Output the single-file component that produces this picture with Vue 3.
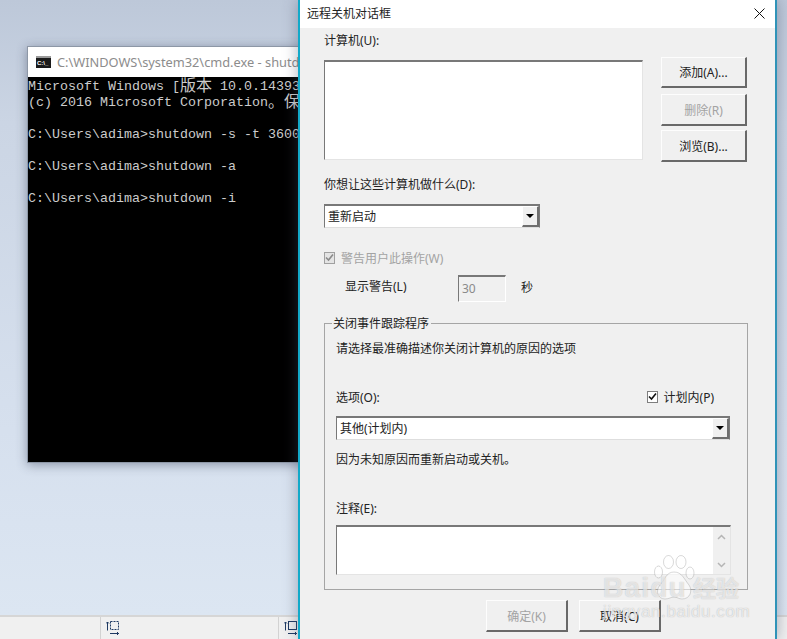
<script setup>
const buttons = [
  { label: '添加(A)...', disabled: false },
  { label: '删除(R)', disabled: true },
  { label: '浏览(B)...', disabled: false },
]
</script>

<template>
  <div class="stage">
    <div class="desktop"></div>
    <div class="taskbar">
      <div class="tb-lead"></div>
      <div class="tb-item">
        <svg class="tb-icon" width="14" height="14" viewBox="0 0 14 14" fill="none" stroke="#1f3a63" stroke-width="1">
          <path d="M1.5 9.5V1M0 2.5L1.5 1L3 2.5" />
          <rect x="4.5" y="0.5" width="8" height="8" stroke-dasharray="2 1" />
          <path d="M4 12.5H13M11.5 11V14" />
        </svg>
      </div>
      <div class="tb-item">
        <svg class="tb-icon" width="14" height="14" viewBox="0 0 14 14" fill="none" stroke="#1f3a63" stroke-width="1">
          <path d="M1.5 9.5V1M0 2.5L1.5 1L3 2.5" />
          <rect x="4.5" y="0.5" width="8" height="8" />
          <path d="M4 12.5H13M11.5 11V14" />
        </svg>
      </div>
    </div>

    <div class="cmd">
      <div class="cmd-title">
        <svg class="cmd-icon" width="15" height="12" viewBox="0 0 15 12">
          <rect width="15" height="12" fill="#1a1a1a" />
          <rect x="0" y="0" width="15" height="2" fill="#9a9a9a" />
          <text x="1" y="9" font-size="6" font-weight="700" fill="#fff" font-family="Liberation Sans, sans-serif">C:\_</text>
        </svg>
        <span class="cmd-caption">C:\WINDOWS\system32\cmd.exe - shutdown -i</span>
      </div>
      <div class="cmd-body">
        <div class="ln">Microsoft Windows [<span class="cj">版本</span> 10.0.14393</div>
        <div class="ln">(c) 2016 Microsoft Corporation<span class="cj">。保</span></div>
        <div class="ln">&nbsp;</div>
        <div class="ln">C:\Users\adima&gt;shutdown -s -t 3600</div>
        <div class="ln">&nbsp;</div>
        <div class="ln">C:\Users\adima&gt;shutdown -a</div>
        <div class="ln">&nbsp;</div>
        <div class="ln">C:\Users\adima&gt;shutdown -i</div>
      </div>
    </div>

    <div class="dialog">
      <div class="dlg-title">
        <span>远程关机对话框</span>
        <svg class="close" width="11" height="11" viewBox="0 0 11 11" stroke="#111" stroke-width="1" fill="none">
          <path d="M0.5 0.5L10.5 10.5M10.5 0.5L0.5 10.5" />
        </svg>
      </div>
      <div class="dlg-body">
        <div class="top-row">
          <div class="list-col">
            <div class="lbl">计算机(U):</div>
            <div class="sunken listbox"></div>
          </div>
          <div class="btn-col">
            <div
              v-for="b in buttons"
              :key="b.label"
              class="btn side-btn"
              :class="{ off: b.disabled }"
            >{{ b.label }}</div>
          </div>
        </div>

        <div class="lbl lbl-d">你想让这些计算机做什么(D):</div>
        <div class="sunken combo combo-d">
          <span class="combo-text">重新启动</span>
          <span class="drop"><i></i></span>
        </div>

        <div class="check-row">
          <span class="box box-off">
            <svg width="9" height="9" viewBox="0 0 9 9" fill="none" stroke="#8a8a8a" stroke-width="1.6"><path d="M1 4.5L3.5 7L8 1.5" /></svg>
          </span>
          <span class="off-text">警告用户此操作(W)</span>
        </div>

        <div class="warn-row">
          <span class="warn-lbl">显示警告(L)</span>
          <span class="sunken num"><span class="combo-text">30</span></span>
          <span class="sec">秒</span>
        </div>

        <div class="group">
          <span class="legend">关闭事件跟踪程序</span>
          <div class="lbl lead">请选择最准确描述你关闭计算机的原因的选项</div>
          <div class="opt-row">
            <span class="lbl">选项(O):</span>
            <span class="planned">
              <span class="box">
                <svg width="9" height="9" viewBox="0 0 9 9" fill="none" stroke="#111" stroke-width="1.6"><path d="M1 4.5L3.5 7L8 1.5" /></svg>
              </span>
              <span>计划内(P)</span>
            </span>
          </div>
          <div class="sunken combo combo-o">
            <span class="combo-text">其他(计划内)</span>
            <span class="drop"><i></i></span>
          </div>
          <div class="lbl reason">因为未知原因而重新启动或关机。</div>
          <div class="lbl note">注释(E):</div>
          <div class="sunken notebox">
            <div class="scroll">
              <svg width="9" height="6" viewBox="0 0 9 6" fill="none" stroke="#b5b5b5" stroke-width="1.5"><path d="M1 5L4.5 1.5L8 5" /></svg>
              <svg width="9" height="6" viewBox="0 0 9 6" fill="none" stroke="#b5b5b5" stroke-width="1.5"><path d="M1 1L4.5 4.5L8 1" /></svg>
            </div>
          </div>
        </div>

        <div class="footer">
          <div class="btn foot-btn off">确定(K)</div>
          <div class="btn foot-btn">取消(C)</div>
        </div>
      </div>
    </div>

    <div class="mark">
      <svg class="paw" width="42" height="46" viewBox="0 0 42 46" fill="rgba(255,255,255,.5)" stroke="rgba(130,130,130,.3)" stroke-width="1">
        <ellipse cx="5.5" cy="17" rx="4" ry="6" />
        <ellipse cx="15.5" cy="7" rx="5" ry="6.5" />
        <ellipse cx="28" cy="7" rx="5" ry="6.5" />
        <ellipse cx="37" cy="18" rx="4" ry="6" />
        <path d="M21 17C29 17 31 24 36 30C40 36 37 44 29 44C26 44 24 42 21 42C18 42 16 44 12 44C5 44 2 36 7 30C12 25 13 17 21 17Z" />
      </svg>
      <div class="mark-main"><span class="bai">Baidu</span><span class="jy">经验</span></div>
      <div class="mark-url">jingyan.baidu.com</div>
    </div>
  </div>
</template>

<style scoped>
* { box-sizing: border-box; }
.stage {
  position: relative;
  width: 787px;
  height: 639px;
  overflow: hidden;
  display: flex;
  flex-direction: column;
  font-family: "Noto Sans", "Noto Sans CJK SC", sans-serif;
  font-size: 12px;
  color: #222;
}
.desktop {
  flex: 1;
  background: linear-gradient(180deg, #bdc8d9 0%, #cbd5e4 20%, #d6e0ee 70%, #dce6f2 100%);
}
.taskbar {
  height: 24px;
  flex: none;
  display: flex;
  background: #f0f0f0;
  border-top: 2px solid #d6d6d6;
}
.tb-lead { width: 100px; }
.tb-item {
  width: 178px;
  border-left: 1px solid #d2d2d2;
  padding: 4px 0 0 5px;
}
.tb-icon { display: block; }

.cmd {
  position: absolute;
  left: 27px;
  top: 46px;
  width: 290px;
  height: 417px;
  background: #000;
  border: 1px solid #8d97a6;
  box-shadow: 0 2px 10px rgba(50, 60, 85, 0.45);
}
.cmd-title {
  height: 30px;
  background: #fff;
  display: flex;
  align-items: center;
  padding-left: 8px;
  gap: 6px;
}
.cmd-icon { flex: none; }
.cmd-caption {
  color: #8c8c8c;
  font-size: 12.8px;
  white-space: nowrap;
}
.cmd-body {
  color: #ccc;
  font-family: "Liberation Mono", "Noto Sans CJK SC", monospace;
  font-size: 13.33px;
  line-height: 16px;
  padding-top: 2px;
}
.ln { height: 16px; white-space: nowrap; }
.cj {
  font-family: "Noto Sans CJK SC", sans-serif;
  font-size: 16px;
  line-height: 0;
  vertical-align: -1px;
}

.dialog {
  position: absolute;
  left: 298px;
  top: 0;
  width: 479px;
  height: 639px;
  background: #f0f0f0;
  border-left: 2px solid #12a9c9;
  border-right: 2px solid #2f93b8;
  box-shadow: 0 0 14px rgba(70, 80, 105, 0.45);
}
.dlg-title {
  height: 28px;
  background: #fff;
  display: flex;
  align-items: center;
  justify-content: space-between;
  padding: 0 10px 2px 7px;
}
.close { margin-top: 1px; }
.dlg-body { padding: 4px 0 0 24px; }

.lbl { height: 16px; line-height: 18px; }
.top-row { display: flex; align-items: flex-start; height: 129px; }
.list-col { width: 319px; }
.listbox { width: 319px; height: 100px; margin-top: 12px; background: #fff; }
.btn-col {
  margin-left: 18px;
  padding-top: 25px;
  display: flex;
  flex-direction: column;
}
.btn {
  flex: none;
  display: flex;
  align-items: center;
  justify-content: center;
  background: #f0f0f0;
  border-style: solid;
  border-width: 1px 2px 2px 1px;
  border-color: #fdfdfd #696969 #696969 #fdfdfd;
}
.off { color: #a3a3a3; }
.side-btn { width: 86px; height: 32px; margin-bottom: 4px; }
.side-btn:first-child { height: 31px; margin-bottom: 6px; }

.sunken {
  border-style: solid;
  border-width: 2px 1px 1px 1px;
  border-color: #787878 #e4e4e4 #e4e4e4 #787878;
}
.lbl-d { margin-top: 15px; }
.combo {
  height: 24px;
  background: #fff;
  display: flex;
  align-items: center;
  justify-content: space-between;
  padding-left: 3px;
  margin-top: 12px;
  border-right-color: #787878;
  border-bottom-color: #dedede;
}
.combo-text { position: relative; top: -1px; }
.combo-d { width: 216px; }
.combo-o { width: 394px; margin-top: 11px; }
.drop {
  width: 17px;
  height: 21px;
  background: #f0f0f0;
  border-style: solid;
  border-width: 1px 2px 2px 1px;
  border-color: #fff #6e6e6e #6e6e6e #fff;
  display: flex;
  align-items: center;
  justify-content: center;
}
.drop i {
  width: 0;
  height: 0;
  border-left: 4px solid transparent;
  border-right: 4px solid transparent;
  border-top: 4px solid #000;
}

.check-row {
  margin-top: 22px;
  height: 15px;
  display: flex;
  align-items: center;
  gap: 6px;
}
.box {
  width: 11px;
  height: 12px;
  flex: none;
  display: flex;
  align-items: center;
  justify-content: center;
  background: #fff;
  border: 1px solid #7e7e7e;
}
.box-off { background: #e4e4e4; border-color: #a0a0a0; }
.off-text { color: #a3a3a3; }
.warn-row {
  margin-top: 10px;
  height: 27px;
  display: flex;
  align-items: center;
}
.warn-lbl { margin-left: 21px; width: 113px; padding-bottom: 5px; }
.num {
  width: 48px;
  height: 27px;
  display: flex;
  align-items: center;
  padding-left: 3px;
  color: #8a8a8a;
  border-right-color: #fff;
  border-bottom-color: #fff;
}
.sec { margin-left: 15px; padding-bottom: 3px; }

.group {
  position: relative;
  width: 424px;
  height: 267px;
  margin-top: 21px;
  padding: 17px 0 0 11px;
  border: 1px solid #a5a5a5;
}
.legend {
  position: absolute;
  left: 7px;
  top: -8px;
  padding: 0 2px 0 1px;
  line-height: 16px;
  background: #f0f0f0;
}
.lead { line-height: 16px; }
.opt-row {
  margin-top: 32px;
  width: 394px;
  display: flex;
  justify-content: space-between;
}
.planned {
  display: flex;
  align-items: center;
  gap: 6px;
  margin-right: 16px;
  height: 15px;
}
.reason { margin-top: 12px; line-height: 16px; }
.note { margin-top: 33px; line-height: 16px; }
.notebox {
  width: 395px;
  height: 50px;
  margin-top: 8px;
  background: #fff;
  display: flex;
  justify-content: flex-end;
}
.scroll {
  width: 17px;
  background: #f0f0f0;
  display: flex;
  flex-direction: column;
  align-items: center;
  justify-content: space-between;
  padding: 7px 0 6px;
}
.footer {
  display: flex;
  gap: 11px;
  margin: 10px 0 0 162px;
}
.foot-btn { width: 82px; height: 32px; }

.mark {
  position: absolute;
  left: 603px;
  top: 555px;
  width: 142px;
  height: 66px;
  pointer-events: none;
}
.paw { position: absolute; left: 50px; top: 0; }
.mark-main {
  position: absolute;
  left: 0;
  top: 18px;
  display: flex;
  align-items: baseline;
  white-space: nowrap;
}
.bai {
  font-family: "Liberation Sans", sans-serif;
  font-weight: 700;
  font-size: 28px;
  line-height: 28px;
  letter-spacing: 1.2px;
  width: 90px;
  color: rgba(255, 255, 255, 0.65);
  text-shadow: 0 0 1px rgba(90, 90, 90, 0.4);
}
.jy {
  font-family: "Noto Sans CJK SC", sans-serif;
  font-weight: 700;
  font-size: 23px;
  line-height: 28px;
  color: rgba(255, 255, 255, 0.65);
  text-shadow: 0 0 1px rgba(90, 90, 90, 0.4);
}
.mark-url {
  position: absolute;
  left: 0;
  top: 47px;
  font-family: "Liberation Sans", sans-serif;
  font-size: 17px;
  line-height: 20px;
  letter-spacing: 0.6px;
  white-space: nowrap;
  color: rgba(255, 255, 255, 0.7);
  text-shadow: 0 0 1px rgba(90, 90, 90, 0.45);
}
</style>

<style>
html, body { margin: 0; overflow: hidden; }
</style>
